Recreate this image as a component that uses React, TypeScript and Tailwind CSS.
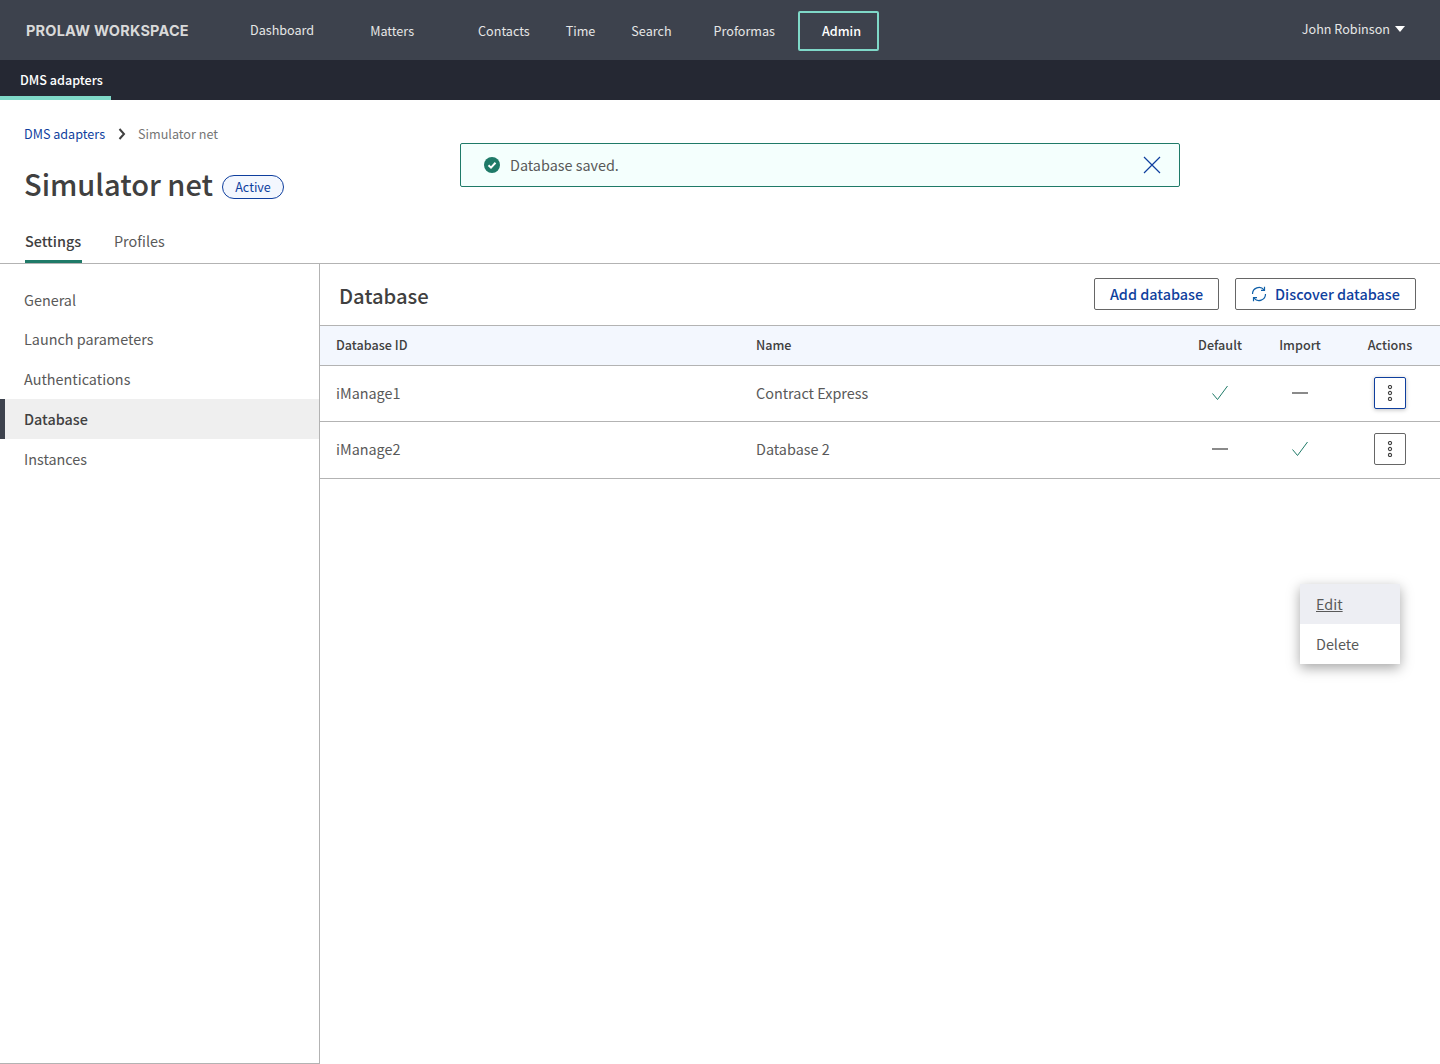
import React from 'react';

// Noto Sans CJK latin glyphs run about 10% larger, so sizes here are scaled down
const font = { fontFamily: '"Noto Sans CJK SC", "Noto Sans", sans-serif' };

const navItems = [
  { label: 'Dashboard', className: 'ml-[61px] mt-0' },
  { label: 'Matters', className: 'ml-[56px] mt-[2px]' },
  { label: 'Contacts', className: 'ml-[64px] mt-[2px]' },
  { label: 'Time', className: 'ml-[36px] mt-[2px]' },
  { label: 'Search', className: 'ml-[36px] mt-[2px]' },
  { label: 'Proformas', className: 'ml-[42px] mt-[2px]' },
];

const sideItems = [
  { label: 'General', className: 'h-[39px] pt-[1px]' },
  { label: 'Launch parameters', className: 'h-[40px]' },
  { label: 'Authentications', className: 'h-[40px]' },
  { label: 'Database', className: 'h-[40px]', active: true },
  { label: 'Instances', className: 'h-[40px]' },
];

const Check = () => (
  <svg width="16" height="16" viewBox="0 0 16 16" fill="none" stroke="#1f7a68" strokeWidth="1">
    <path d="M0.5 8.5 L5.5 14.5 L15.5 1" />
  </svg>
);

const Dash = () => <div className="w-[16px] h-[2px] bg-[#8a8a8a]" />;

const Kebab = ({ focused }: { focused?: boolean }) => (
  <button
    type="button"
    className={`w-[32px] h-[32px] rounded-[2px] bg-white flex items-center justify-center border ${focused ? 'border-[#0f3f9e] shadow-[0_1px_4px_rgba(0,0,0,0.25)]' : 'border-[#666666]'}`}
  >
    <svg width="6" height="16" viewBox="0 0 6 16" fill="none" stroke="#404040" strokeWidth="1.1">
      <circle cx="3" cy="2" r="1.6" />
      <circle cx="3" cy="8" r="1.6" />
      <circle cx="3" cy="14" r="1.6" />
    </svg>
  </button>
);

const rows = [
  { id: 'iManage1', name: 'Contract Express', def: true, imp: false, focused: true, className: 'h-[56px] pb-[1px]' },
  { id: 'iManage2', name: 'Database 2', def: false, imp: true, focused: false, className: 'h-[57px] pb-[2px]' },
];

export default function App() {
  return (
    <div className="relative h-[1064px] bg-white flex flex-col text-[#404040] overflow-hidden" style={font}>
      {/* Top nav */}
      <header className="h-[60px] bg-[#3d424d] flex items-center text-[12.6px] leading-[20px] text-[#e6e6e6] shrink-0">
        <span
          className="ml-[26px] w-[163px] mt-[2px] text-[14.5px] leading-[20px] font-bold tracking-[0.2px] whitespace-nowrap text-[#d9d9d9]"
          style={{ fontFamily: 'Inter, "Liberation Sans", sans-serif' }}
        >
          PROLAW WORKSPACE
        </span>
        {navItems.map(item => (
          <a key={item.label} className={`${item.className} whitespace-nowrap`}>{item.label}</a>
        ))}
        <a className="ml-[23px] mt-[2px] w-[81px] h-[40px] border-2 border-[#7fd8c8] rounded-[2px] flex items-center justify-center pl-[6px] font-medium text-white">
          Admin
        </a>
        <div className="ml-auto mr-[35px] -mt-[3px] flex items-center gap-[5px]">
          <span>John Robinson</span>
          <svg width="10" height="6" viewBox="0 0 10 6"><path d="M0 0h10L5 6z" fill="#ffffff" /></svg>
        </div>
      </header>

      {/* Sub nav */}
      <div className="h-[40px] bg-[#252833] flex shrink-0">
        <div className="w-[111px] h-[40px] border-b-4 border-[#7fd8c8] pl-[20px] pt-[10px] text-[12.6px] leading-[20px] font-medium text-white whitespace-nowrap">
          DMS adapters
        </div>
      </div>

      {/* Page header */}
      <div className="h-[164px] border-b border-[#b3b3b3] px-[24px] shrink-0 flex flex-col">
        <div className="flex items-center mt-[24px] h-[20px] text-[12.6px] leading-[20px]">
          <a className="text-[#0f3f9e]">DMS adapters</a>
          <svg className="ml-[13px]" width="8" height="12" viewBox="0 0 8 12" fill="none" stroke="#404040" strokeWidth="2">
            <path d="M1.5 1 L6 6 L1.5 11" />
          </svg>
          <span className="ml-[12px] text-[#757575]">Simulator net</span>
        </div>
        <div className="flex items-center mt-[21px] h-[40px]">
          <h1 className="mb-[4px] text-[29px] leading-[40px] font-medium text-[#404040]">Simulator net</h1>
          <span className="ml-[9px] mt-[4px] h-[24px] w-[62px] rounded-full border border-[#0f3f9e] bg-[#f3f7fe] text-[#0f3f9e] text-[12.6px] leading-[22px] text-center">
            Active
          </span>
        </div>
        <div className="flex mt-[24px] text-[14.4px] leading-[24px]">
          <div className="w-[57px] h-[34px] ml-px border-b-[3px] border-[#1f7a68] font-medium text-[#404040]">Settings</div>
          <div className="ml-[32px] text-[#595959]">Profiles</div>
        </div>
      </div>

      {/* Body */}
      <div className="flex flex-1">
        <aside className="w-[320px] border-r border-b border-[#b3b3b3] pt-[16px] shrink-0">
          {sideItems.map(item => (
            <div
              key={item.label}
              className={`${item.className} flex items-center text-[14.4px] leading-[24px] ${item.active ? 'bg-[#efefef] border-l-[5px] border-[#3d424d] pl-[19px] font-medium' : 'pl-[24px] text-[#595959]'}`}
            >
              {item.label}
            </div>
          ))}
        </aside>

        <main className="flex-1 min-w-0">
          <div className="h-[61px] flex items-center px-[19px] pr-[24px] pb-[1px]">
            <h2 className="mt-[3px] text-[20.2px] leading-[28px] font-medium text-[#404040]">Database</h2>
            <button type="button" className="ml-auto w-[125px] h-[32px] border border-[#666666] rounded-[2px] text-[14.4px] leading-[24px] font-medium text-[#0f3f9e]">
              Add database
            </button>
            <button type="button" className="ml-[16px] w-[181px] h-[32px] border border-[#666666] rounded-[2px] text-[14.4px] leading-[24px] font-medium text-[#0f3f9e] flex items-center justify-center gap-[8px]">
              <svg width="16" height="16" viewBox="0 0 16 16" fill="none" stroke="#0f5fa8" strokeWidth="1.2">
                <path d="M1.5 8 A6.5 6.5 0 0 1 13 3.8" />
                <path d="M13.5 0.8 V4.3 H10" />
                <path d="M14.5 8 A6.5 6.5 0 0 1 3 12.2" />
                <path d="M2.5 15.2 V11.7 H6" />
              </svg>
              Discover database
            </button>
          </div>

          <div className="border-t border-[#b3b3b3]">
            <div className="h-[40px] pb-[2px] bg-[#f3f7fe] border-b border-[#b3b3b3] flex items-center text-[12.6px] leading-[18px] font-medium text-[#404040]">
              <div className="w-[436px] pl-[16px]">Database ID</div>
              <div className="flex-1">Name</div>
              <div className="w-[80px] text-center">Default</div>
              <div className="w-[80px] text-center">Import</div>
              <div className="w-[100px] text-center">Actions</div>
            </div>
            {rows.map(row => (
              <div key={row.id} className={`${row.className} border-b border-[#b3b3b3] flex items-center text-[14.4px] leading-[24px] text-[#595959]`}>
                <div className="w-[436px] pl-[16px]">{row.id}</div>
                <div className="flex-1">{row.name}</div>
                <div className="w-[80px] flex justify-center">{row.def ? <Check /> : <Dash />}</div>
                <div className="w-[80px] flex justify-center">{row.imp ? <Check /> : <Dash />}</div>
                <div className="w-[100px] flex justify-center"><Kebab focused={row.focused} /></div>
              </div>
            ))}
          </div>
        </main>
      </div>

      {/* Toast */}
      <div className="absolute left-[460px] top-[143px] w-[720px] h-[44px] bg-[#f4fffd] border border-[#1f7a68] rounded-[2px] flex items-center pl-[23px] pr-[18px]">
        <svg width="16" height="16" viewBox="0 0 16 16">
          <circle cx="8" cy="8" r="8" fill="#1f7a68" />
          <path d="M4.5 8.2 L7 10.6 L11.5 5.8" fill="none" stroke="#ffffff" strokeWidth="2" />
        </svg>
        <span className="ml-[10px] text-[14.4px] leading-[24px] text-[#595959]">Database saved.</span>
        <svg className="ml-auto" width="18" height="18" viewBox="0 0 18 18" fill="none" stroke="#0f3f9e" strokeWidth="1.2">
          <path d="M1 1 L17 17 M17 1 L1 17" />
        </svg>
      </div>

      {/* Actions menu */}
      <div className="absolute left-[1300px] top-[584px] w-[100px] bg-white shadow-[0_4px_12px_rgba(0,0,0,0.35)] text-[14.4px] leading-[24px] text-[#595959]">
        <div className="h-[40px] bg-[#edeef3] pl-[16px] flex items-center underline">Edit</div>
        <div className="h-[40px] pl-[16px] flex items-center">Delete</div>
      </div>
    </div>
  );
}
